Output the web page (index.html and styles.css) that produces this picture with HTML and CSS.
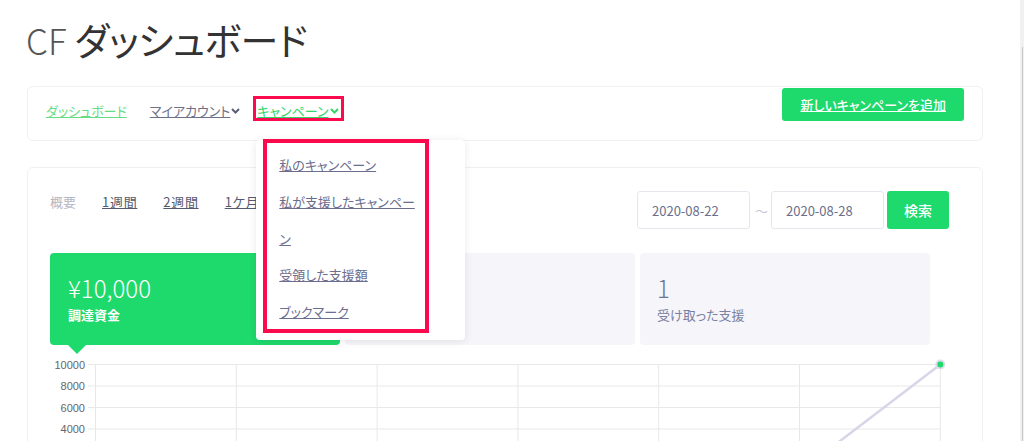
FILE: index.html
```html
<!DOCTYPE html>
<html lang="ja">
<head>
    <meta charset="UTF-8">
    <meta name="viewport" content="width=device-width, initial-scale=1.0">
    <title>CF ダッシュボード</title>
    <link rel="stylesheet" href="styles.css">
</head>
<body>
    <div class="page">
        <h1 class="title"><span class="title-cf">CF</span> ダッシュボード</h1>

        <nav class="navbar">
            <ul class="nav-menu">
                <li class="nav-item"><a class="nav-link nav-link--home" href="#">ダッシュボード</a></li>
                <li class="nav-item">
                    <a class="nav-link" href="#">マイアカウント</a>
                    <svg class="chevron" width="9" height="6" viewBox="0 0 9 6"><path d="M1 1l3.5 3.5L8 1" /></svg>
                </li>
                <li class="nav-item nav-item--open">
                    <a class="nav-link nav-link--active" href="#">キャンペーン</a>
                    <svg class="chevron" width="9" height="6" viewBox="0 0 9 6"><path d="M1 1l3.5 3.5L8 1" /></svg>
                    <div class="dropdown">
                        <ul class="dropdown-list">
                            <li><a class="dropdown-link" href="#">私のキャンペーン</a></li>
                            <li><a class="dropdown-link" href="#">私が支援したキャンペーン</a></li>
                            <li><a class="dropdown-link" href="#">受領した支援額</a></li>
                            <li><a class="dropdown-link" href="#">ブックマーク</a></li>
                        </ul>
                    </div>
                </li>
            </ul>
            <a class="btn-add" href="#">新しいキャンペーンを追加</a>
        </nav>

        <section class="panel">
            <div class="filter-bar">
                <ul class="period-tabs">
                    <li class="period-tab period-tab--label">概要</li>
                    <li><a class="period-tab" href="#">1週間</a></li>
                    <li><a class="period-tab" href="#">2週間</a></li>
                    <li><a class="period-tab" href="#">1ケ月</a></li>
                </ul>
                <form class="date-range">
                    <input class="date-input" type="text" value="2020-08-22">
                    <span class="range-sep">〜</span>
                    <input class="date-input" type="text" value="2020-08-28">
                    <button class="btn-search" type="button">検索</button>
                </form>
            </div>

            <div class="stats">
                <div class="stat-card stat-card--primary">
                    <p class="stat-value">¥10,000</p>
                    <p class="stat-label">調達資金</p>
                </div>
                <div class="stat-card">
                    <p class="stat-value">1</p>
                    <p class="stat-label">支援者</p>
                </div>
                <div class="stat-card">
                    <p class="stat-value">1</p>
                    <p class="stat-label">受け取った支援</p>
                </div>
            </div>

            <svg class="chart" width="899" height="125" viewBox="0 0 899 125">
                <g class="chart-grid">
                    <line x1="38" y1="11.5" x2="890" y2="11.5" />
                    <line x1="38" y1="33" x2="890" y2="33" />
                    <line x1="38" y1="54.5" x2="890" y2="54.5" />
                    <line x1="38" y1="76" x2="890" y2="76" />
                    <line x1="38" y1="97.5" x2="890" y2="97.5" />
                    <line x1="38" y1="119" x2="890" y2="119" />
                    <line x1="45.5" y1="11.5" x2="45.5" y2="125" />
                    <line x1="186.3" y1="11.5" x2="186.3" y2="125" />
                    <line x1="327.1" y1="11.5" x2="327.1" y2="125" />
                    <line x1="467.9" y1="11.5" x2="467.9" y2="125" />
                    <line x1="608.7" y1="11.5" x2="608.7" y2="125" />
                    <line x1="749.5" y1="11.5" x2="749.5" y2="125" />
                    <line x1="890.3" y1="11.5" x2="890.3" y2="125" />
                </g>
                <g class="chart-labels">
                    <text x="35" y="15.5">10000</text>
                    <text x="35" y="37">8000</text>
                    <text x="35" y="58.5">6000</text>
                    <text x="35" y="80">4000</text>
                    <text x="35" y="101.5">2000</text>
                    <text x="35" y="123">0</text>
                </g>
                <polyline class="chart-line" points="45.5,119 186.3,119 327.1,119 467.9,119 608.7,119 749.5,119 890.3,11.5" />
                <circle class="chart-point" cx="890.3" cy="11.5" r="4" />
            </svg>
        </section>
    </div>
    <div class="scrollbar"></div>
</body>
</html>
```

FILE: styles.css
```css
body {
    margin: 0;
    font-family: "Noto Sans CJK JP", "Noto Sans", sans-serif;
    font-size: 13px;
    color: #555a6e;
    background-color: #fff;
    font-feature-settings: "palt";
}
ul {
    list-style: none;
    margin: 0;
    padding: 0;
}
p {
    margin: 0;
}
.page {
    width: 956px;
    margin-left: 27px;
}
.title {
    margin: 14px 0 21px -1px;
    font-size: 38px;
    line-height: 50px;
    font-weight: 400;
    letter-spacing: -0.5px;
    color: #333;
}
.title-cf {
    font-family: "Noto Sans CJK JP Light", "Lato", "Noto Sans", sans-serif;
    font-size: 35px;
    font-weight: 300;
    letter-spacing: 0;
    color: #555;
}

/* ナビゲーション */
.navbar {
    display: flex;
    justify-content: space-between;
    align-items: flex-start;
    height: 52px;
    padding: 1px 18px 0;
    border: 1px solid #f0f0f3;
    border-radius: 6px;
}
.nav-menu {
    display: flex;
    gap: 23px;
    margin-top: 13px;
}
.nav-item {
    position: relative;
    display: flex;
    align-items: center;
    line-height: 20px;
}
.nav-link {
    color: #6e7089;
}
.nav-link--home {
    color: #66dc88;
}
.nav-link--active {
    color: #33d46a;
}
.chevron {
    margin: 0 -6px 0 1px;
    fill: none;
    stroke: #5c5f78;
    stroke-width: 2;
}
.nav-item--open .chevron {
    stroke: #33d46a;
}
.nav-item--open::before {
    content: "";
    position: absolute;
    left: -4px;
    top: -5px;
    width: 91px;
    height: 25px;
    border: 3px solid #fb0a4e;
    box-sizing: border-box;
}
.btn-add {
    display: block;
    height: 33px;
    line-height: 33px;
    padding: 0 18px;
    background-color: #1ed96b;
    color: white;
    border-radius: 3px;
    font-weight: 500;
}

/* ドロップダウン */
.dropdown {
    position: absolute;
    left: -1px;
    top: 39px;
    width: 209px;
    height: 200px;
    background-color: #fff;
    border-radius: 4px;
    box-shadow: 0 1px 8px rgba(0, 0, 0, 0.09);
    z-index: 10;
}
.dropdown-list {
    width: 138px;
    height: 182px;
    margin: -1px 0 0 7px;
    padding: 4px 8px 0 12px;
    border: 4px solid #fb0a4e;
    line-height: 36.8px;
}
.dropdown-link {
    color: #6b6d8f;
}

/* メインパネル */
.panel {
    margin-top: 26px;
    min-height: 320px;
    padding: 23px 33px 0 22px;
    border: 1px solid #f0f0f3;
    border-radius: 6px;
}
.filter-bar {
    display: flex;
    justify-content: space-between;
    align-items: flex-start;
}
.period-tabs {
    display: flex;
    gap: 26px;
    margin-top: 1px;
    line-height: 20px;
}
.period-tab {
    color: #555a6e;
    letter-spacing: 0.7px;
}
.period-tab--label {
    color: #b4b7c4;
    letter-spacing: 0;
}
.date-range {
    display: flex;
    align-items: center;
}
.date-input {
    width: 113px;
    height: 38px;
    box-sizing: border-box;
    padding: 0 14px;
    border: 1px solid #e6e6ec;
    border-radius: 3px;
    font-family: inherit;
    font-size: 13px;
    color: #6b6f8c;
}
.range-sep {
    margin: 0 3px 0 5px;
    color: #c5c6d0;
}
.btn-search {
    width: 62px;
    height: 38px;
    margin-left: 3px;
    border: none;
    border-radius: 3px;
    background-color: #1ed96b;
    color: white;
    font-family: inherit;
    font-size: 14px;
    font-weight: 500;
}

/* 集計カード */
.stats {
    display: grid;
    grid-template-columns: repeat(3, 290px);
    gap: 5px;
    margin-top: 24px;
}
.stat-card {
    position: relative;
    height: 92px;
    box-sizing: border-box;
    padding: 20px 17px 0;
    background-color: #f5f5fa;
    border-radius: 4px;
    color: #7b80a0;
}
.stat-value {
    font-size: 24px;
    line-height: 30px;
    font-weight: 300;
    color: #6b7491;
}
.stat-label {
    margin-top: 2px;
    line-height: 20px;
}
.stat-card--primary {
    padding-left: 18px;
    background-color: #1ed96b;
    color: white;
}
.stat-card--primary .stat-value {
    color: white;
}
.stat-card--primary .stat-label {
    font-weight: 700;
}
.stat-card--primary::after {
    content: "";
    position: absolute;
    left: 18px;
    top: 100%;
    border-left: 9px solid transparent;
    border-right: 9px solid transparent;
    border-top: 9px solid #1ed96b;
}

/* グラフ */
.chart {
    display: block;
    margin-top: 8px;
    overflow: visible;
}
.chart-grid line {
    stroke: #e8e8e8;
    stroke-width: 1;
}
.chart-labels text {
    font-family: "Liberation Sans", Arial, sans-serif;
    font-size: 11px;
    fill: #666;
    text-anchor: end;
}
.chart-line {
    fill: none;
    stroke: #d6d6e8;
    stroke-width: 2.5;
}
.chart-point {
    fill: #1ed96b;
    stroke: #dcdcea;
    stroke-width: 2;
}

.scrollbar {
    position: fixed;
    top: 0;
    right: 0;
    width: 4px;
    height: 100%;
    background-color: #f1f1f1;
}
.scrollbar::before {
    content: "";
    position: absolute;
    left: 2px;
    top: 47px;
    bottom: 0;
    width: 1px;
    background-color: #c8c8c8;
}
```
